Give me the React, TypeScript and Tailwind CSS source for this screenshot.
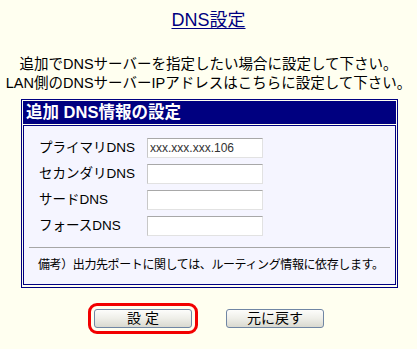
import React from "react";

const rows = [
  { label: "プライマリDNS", value: "xxx.xxx.xxx.106" },
  { label: "セカンダリDNS", value: "" },
  { label: "サードDNS", value: "" },
  { label: "フォースDNS", value: "" },
];

function XpButton({ children, highlight }: { children: React.ReactNode; highlight?: boolean }) {
  return (
    <button
      className={
        "h-[19px] w-[98px] rounded-[3px] border border-[#7086a4] bg-gradient-to-b from-[#fdfdfb] via-[#eeeee8] to-[#d9d9d0] text-[14px] leading-[17px] text-black" +
        (highlight ? " outline-[3px] outline-solid outline-[#f20000] outline-offset-[3px]" : "")
      }
    >
      {children}
    </button>
  );
}

export default function App() {
  return (
    <div
      className="min-h-screen w-[417px] bg-[#fffff0] text-black"
      style={{ fontFamily: '"Liberation Sans", "Noto Sans CJK JP", sans-serif' }}
    >
      <h1 className="pt-[9px] text-center text-[18px] leading-[22px] text-[#000080] underline underline-offset-2">
        DNS設定
      </h1>

      <p className="mt-[24px] text-center text-[14.5px] leading-[19px]">
        追加でDNSサーバーを指定したい場合に設定して下さい。
        <br />
        LAN側のDNSサーバーIPアドレスはこちらに設定して下さい。
      </p>

      <div className="ml-[21px] mt-[6px] w-[377px] border border-[#000080] p-px pb-[2px]">
        <div className="h-[23px] bg-[#000080] pl-[3px] text-[16.5px] font-bold leading-[23px] text-white">
          追加 DNS情報の設定
        </div>
        <div className="mt-px border border-[#000080] bg-[#f5f5ff] pt-[12px] pb-[11px]">
          <div className="flex flex-col gap-[6px] pl-[15px]">
            {rows.map((row) => (
              <div key={row.label} className="flex h-[20px] items-center">
                <span className="w-[108px] text-[13.5px] leading-[20px]">{row.label}</span>
                <input
                  readOnly
                  value={row.value}
                  className="h-[20px] w-[116px] border border-[#e2e2e2] border-t-[#a8a8a8] border-l-[#c8c8c8] bg-white px-[2px] text-[12px] text-[#333]"
                />
              </div>
            ))}
          </div>
          <div className="mx-[5px] mt-[11px] border-t border-[#a6a6a6]" />
          <p className="mt-[9px] whitespace-nowrap pl-[14px] text-[12px] leading-[16px] tracking-[-0.4px]">
            備考）出力先ポートに関しては、ルーティング情報に依存します。
          </p>
        </div>
      </div>

      <div className="mt-[21px] flex justify-center gap-[34px] pl-px">
        <XpButton highlight>設 定</XpButton>
        <XpButton>元に戻す</XpButton>
      </div>
    </div>
  );
}
